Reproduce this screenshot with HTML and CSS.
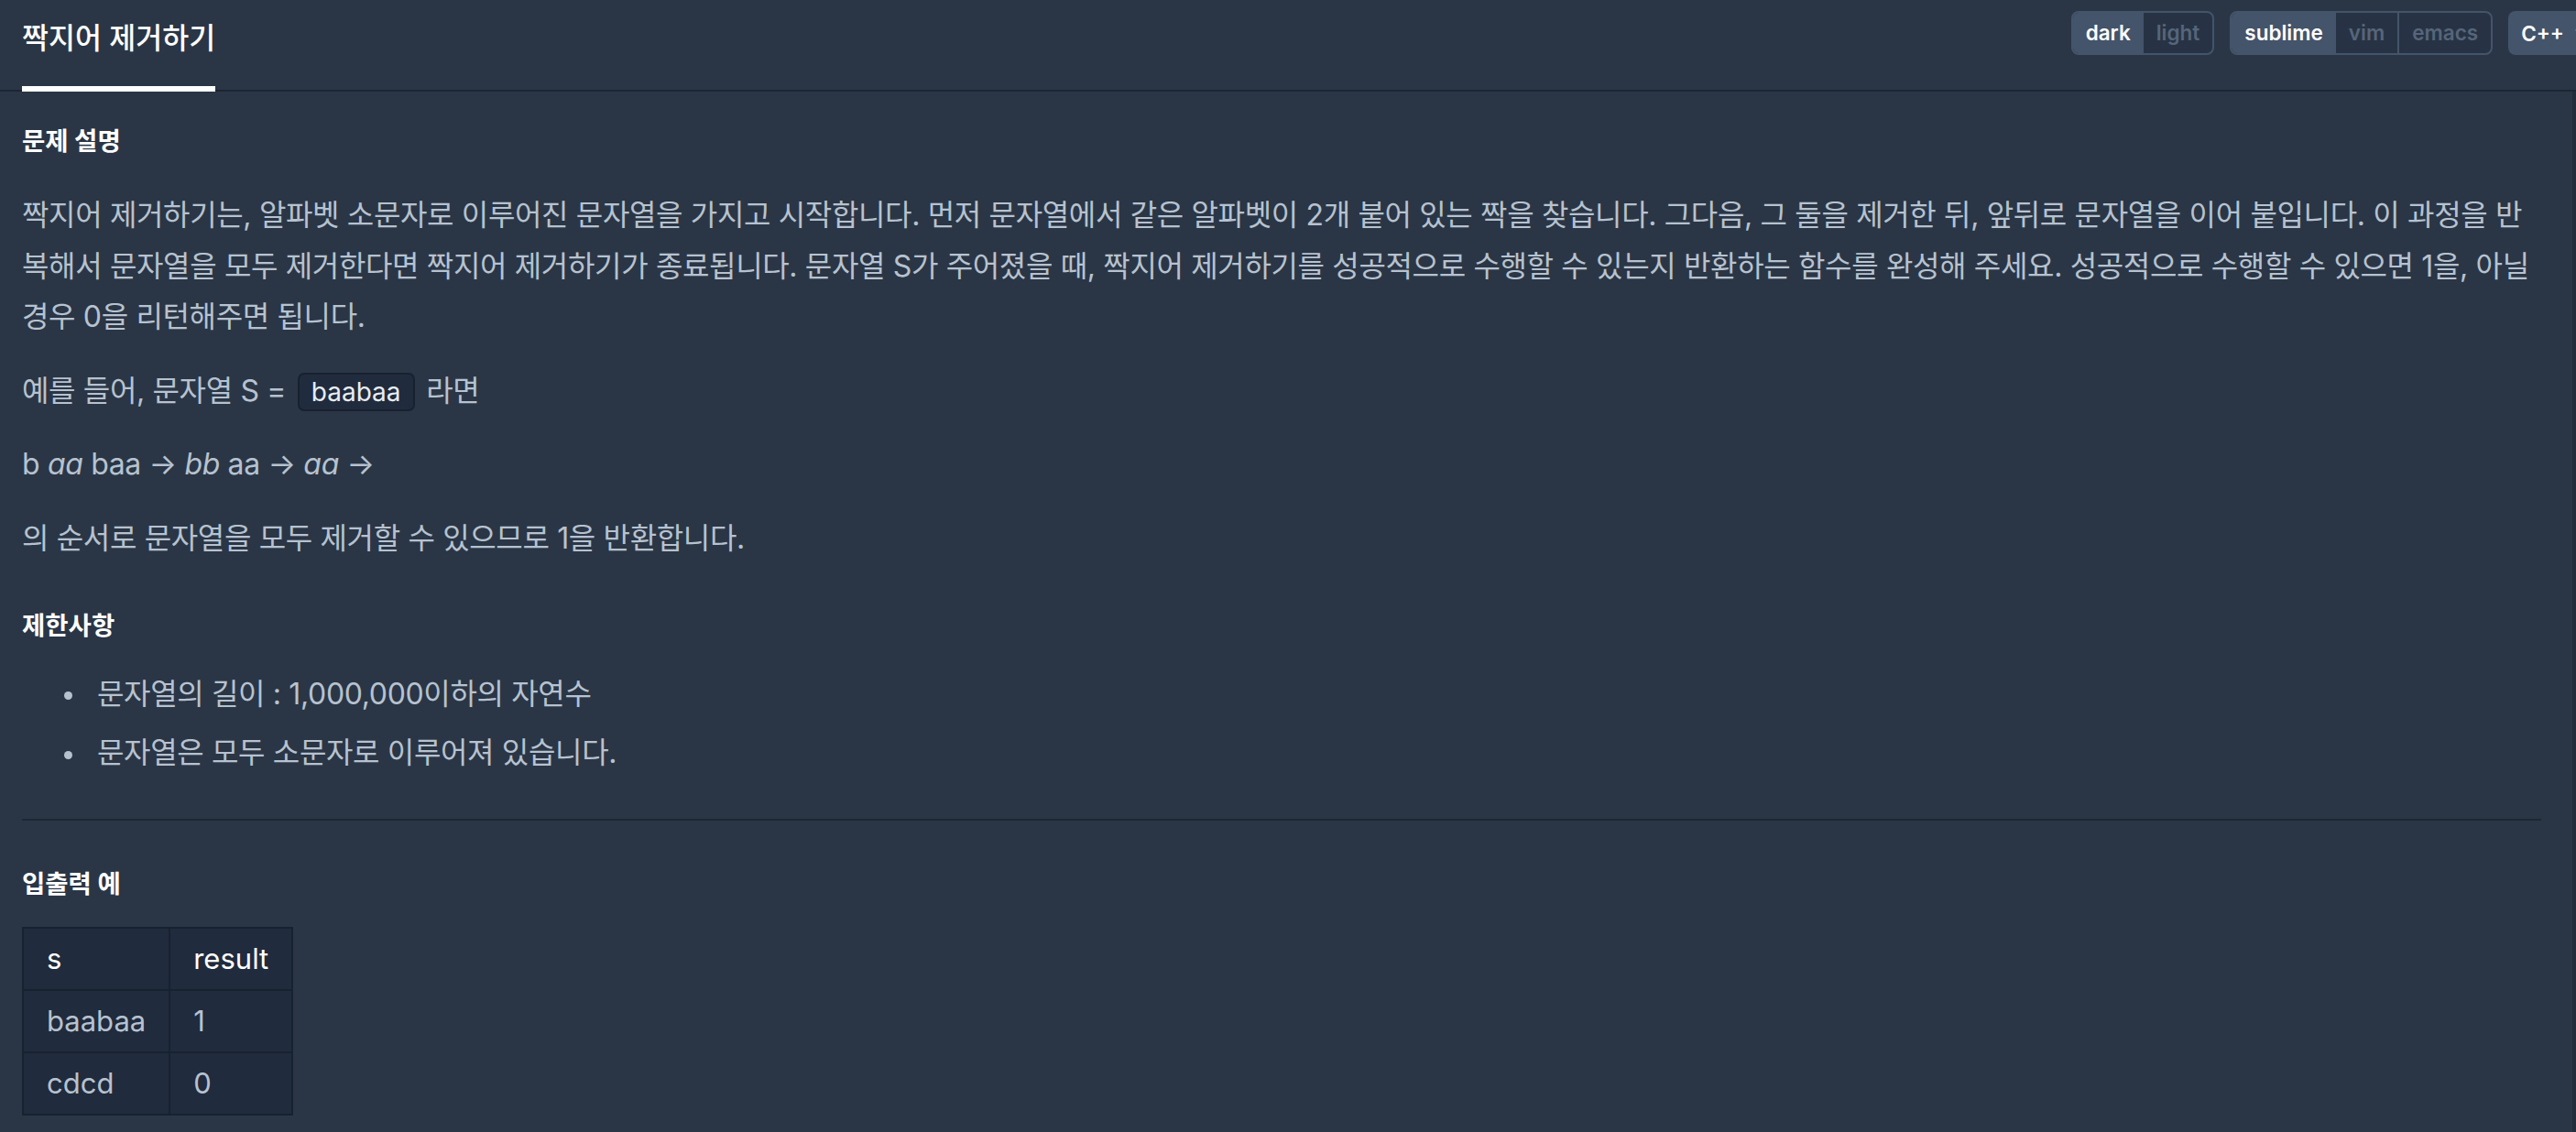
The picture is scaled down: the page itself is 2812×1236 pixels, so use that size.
FILE: index.html
```html
<!DOCTYPE html>
<html lang="ko">
<head>
<meta charset="utf-8">
<title>짝지어 제거하기</title>
<link rel="stylesheet" href="styles.css">
</head>
<body>
<header class="header">
  <div class="tab">짝지어 제거하기</div>
  <div class="toolbar">
    <div class="seg-group">
      <span class="seg active">dark</span>
      <span class="seg off">light</span>
    </div>
    <div class="seg-group">
      <span class="seg active">sublime</span>
      <span class="seg off">vim</span>
      <span class="seg off">emacs</span>
    </div>
    <div class="lang-btn">
      <span>C++</span>
      <svg class="caret" width="16" height="10" viewBox="0 0 16 10"><path d="M2 2l6 6 6-6" fill="none" stroke="#fff" stroke-width="2.4" stroke-linecap="round" stroke-linejoin="round"/></svg>
    </div>
  </div>
</header>
<main class="main">
  <h5 class="sec-title">문제 설명</h5>
  <div class="desc">
    <p>짝지어 제거하기는, 알파벳 소문자로 이루어진 문자열을 가지고 시작합니다. 먼저 문자열에서 같은 알파벳이 2개 붙어 있는 짝을 찾습니다. 그다음, 그 둘을 제거한 뒤, 앞뒤로 문자열을 이어 붙입니다. 이 과정을 반복해서 문자열을 모두 제거한다면 짝지어 제거하기가 종료됩니다. 문자열 S가 주어졌을 때, 짝지어 제거하기를 성공적으로 수행할 수 있는지 반환하는 함수를 완성해 주세요. 성공적으로 수행할 수 있으면 1을, 아닐 경우 0을 리턴해주면 됩니다.</p>
    <p>예를 들어, 문자열 S = <code class="code">baabaa</code> 라면</p>
    <p>b <em>aa</em> baa → <em>bb</em> aa → <em>aa</em> →</p>
    <p>의 순서로 문자열을 모두 제거할 수 있으므로 1을 반환합니다.</p>
  </div>
  <h5 class="sec-title spaced">제한사항</h5>
  <ul class="rules">
    <li>문자열의 길이 : 1,000,000이하의 자연수</li>
    <li>문자열은 모두 소문자로 이루어져 있습니다.</li>
  </ul>
  <hr class="divider">
  <h5 class="sec-title">입출력 예</h5>
  <table class="examples">
    <thead>
      <tr><th>s</th><th>result</th></tr>
    </thead>
    <tbody>
      <tr><td>baabaa</td><td>1</td></tr>
      <tr><td>cdcd</td><td>0</td></tr>
    </tbody>
  </table>
</main>
</body>
</html>
```
FILE: styles.css
```css
html, body {
  margin: 0;
  padding: 0;
}
body {
  background: #2a3646;
  font-family: Inter, "Noto Sans CJK KR", sans-serif;
  overflow: hidden;
  height: 1236px;
}
.header {
  display: flex;
  height: 100px;
  box-sizing: border-box;
  border-bottom: 2px solid #1c2532;
  padding-left: 24px;
}
.tab {
  height: 100px;
  box-sizing: border-box;
  margin-bottom: -2px;
  border-bottom: 6px solid #ffffff;
  padding-top: 22px;
  font-size: 31.5px;
  line-height: 40px;
  font-weight: 500;
  color: #ffffff;
  white-space: nowrap;
}
.toolbar {
  margin-left: auto;
  margin-right: -29px;
  padding-top: 12px;
  display: flex;
  gap: 17px;
  align-items: flex-start;
}
.seg-group {
  display: flex;
  height: 48px;
  box-sizing: border-box;
  border: 2px solid #44546a;
  border-radius: 8px;
  overflow: hidden;
  background: #273344;
}
.seg {
  padding: 0 14px;
  font-size: 22.5px;
  font-weight: 600;
  line-height: 44px;
  color: #56657a;
}
.seg.active {
  background: #44546a;
  color: #ffffff;
}
.seg.off + .seg.off {
  border-left: 2px solid #44546a;
}
.lang-btn {
  display: flex;
  align-items: center;
  gap: 12px;
  height: 48px;
  padding: 0 14px;
  box-sizing: border-box;
  background: #44546a;
  border-radius: 8px;
  color: #ffffff;
  font-size: 22.5px;
  font-weight: 600;
}
.main {
  display: block;
  height: 1136px;
  box-sizing: border-box;
  border-right: 4px solid #222c3a;
  padding: 34px 34px 0 24px;
  color: #b7c2cf;
  font-size: 32px;
}
.sec-title {
  margin: 0 0 27px;
  font-size: 27.5px;
  line-height: 40px;
  font-weight: 700;
  color: #ffffff;
}
.sec-title.spaced {
  margin-top: 47px;
}
.desc {
  padding-top: 6px;
}
.desc p {
  margin: 0 0 25px;
  line-height: 55.6px;
  letter-spacing: -0.35px;
}
.desc em {
  font-style: italic;
}
.code {
  display: inline-block;
  font-family: Inter, "Noto Sans CJK KR", sans-serif;
  font-size: 28px;
  line-height: 38px;
  padding: 0 13px;
  margin: 0 4px;
  letter-spacing: 0;
  background: #202b3d;
  border: 2px solid #18212e;
  border-radius: 7px;
  color: #e8edf2;
}
.rules {
  margin: 0;
  padding-left: 82px;
  list-style: none;
}
.rules li {
  line-height: 55.6px;
  margin-bottom: 9px;
  letter-spacing: -0.35px;
}
.rules li::before {
  content: "";
  display: inline-block;
  width: 9px;
  height: 9px;
  border-radius: 50%;
  background: #b7c2cf;
  margin-left: -36px;
  margin-right: 27px;
  vertical-align: middle;
}
.rules li:last-child {
  margin-bottom: 0;
}
.divider {
  border: 0;
  border-top: 2px solid #1e2735;
  margin: 44px 0 49px;
}
.examples {
  border-collapse: collapse;
  background: #202b3d;
  border: 2px solid #18212e;
}
.examples th,
.examples td {
  border: 2px solid #18212e;
  height: 66px;
  padding: 0 25px;
  font-size: 31px;
  font-weight: 400;
  text-align: left;
  color: #b7c2cf;
}
.examples th {
  color: #ffffff;
}
```
